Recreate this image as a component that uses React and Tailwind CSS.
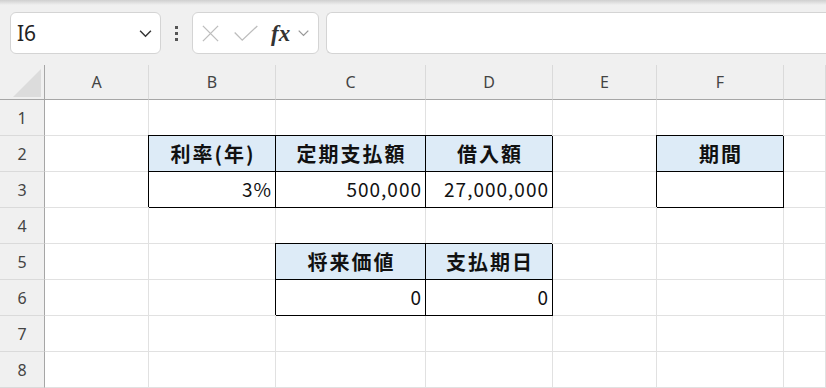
import React from "react";

const COLS = ["A", "B", "C", "D", "E", "F", ""];

// cells keyed by "row-col"
const CELLS = {
  "2-1": { text: "利率(年)", head: true },
  "2-2": { text: "定期支払額", head: true },
  "2-3": { text: "借入額", head: true },
  "2-5": { text: "期間", head: true },
  "3-1": { text: "3%", box: true },
  "3-2": { text: "500,000", box: true },
  "3-3": { text: "27,000,000", box: true },
  "3-5": { text: "", box: true },
  "5-2": { text: "将来価値", head: true },
  "5-3": { text: "支払期日", head: true },
  "6-2": { text: "0", box: true },
  "6-3": { text: "0", box: true },
};

function Chevron({ className }) {
  return (
    <svg viewBox="0 0 16 10" className={className} fill="none" stroke="currentColor" strokeWidth="1.6">
      <path d="M2 2 L8 8 L14 2" />
    </svg>
  );
}

function Toolbar() {
  return (
    <div className="relative h-[65px] bg-[#f0f0f0]">
      <div className="h-[5px] bg-gradient-to-b from-[#cfcfcf] to-[#f0f0f0]" />
      <div className="flex items-start pl-[10px] pt-[7px]">
        {/* name box */}
        <div className="flex h-[42px] w-[151px] items-center justify-between rounded-[6px] border border-[#d4d4d4] bg-white pl-[6px] pr-[7px]">
          <span className="font-['Noto_Sans',sans-serif] text-[21px] leading-none text-[#222]">I6</span>
          <Chevron className="h-[9px] w-[15px] text-[#333]" />
        </div>
        {/* dots */}
        <div className="flex h-[42px] w-[31px] flex-col items-center justify-center gap-[3px]">
          <span className="h-[3px] w-[3px] bg-[#555]" />
          <span className="h-[3px] w-[3px] bg-[#555]" />
          <span className="h-[3px] w-[3px] bg-[#555]" />
        </div>
        {/* fx box */}
        <div className="flex h-[42px] w-[127px] items-center rounded-[6px] border border-[#d4d4d4] bg-white pl-[8px]">
          <svg viewBox="0 0 20 20" className="h-[19px] w-[19px] text-[#bdbdbd]" fill="none" stroke="currentColor" strokeWidth="1.4">
            <path d="M2 2 L18 18 M18 2 L2 18" />
          </svg>
          <svg viewBox="0 0 26 18" className="ml-[13px] h-[17px] w-[26px] text-[#bdbdbd]" fill="none" stroke="currentColor" strokeWidth="1.4">
            <path d="M1 8 L9 16 L25 1" />
          </svg>
          <span className="ml-[12px] font-['Liberation_Serif',serif] text-[23px] font-bold italic leading-none text-[#333]">fx</span>
          <Chevron className="ml-[7px] h-[8px] w-[13px] text-[#999]" />
        </div>
        {/* formula box */}
        <div className="ml-[7px] h-[42px] flex-1 rounded-l-[6px] border border-r-0 border-[#d4d4d4] bg-white" />
      </div>
    </div>
  );
}

function Corner() {
  return (
    <div className="relative border-b border-r border-[#a6a6a6] bg-[#f0f0f0]">
      <svg viewBox="0 0 28 28" className="absolute bottom-[2px] right-[3px] h-[28px] w-[28px]">
        <path d="M28 0 L28 28 L0 28 Z" fill="#dcdcdc" />
      </svg>
    </div>
  );
}

export default function App() {
  const rows = [1, 2, 3, 4, 5, 6, 7, 8];
  return (
    <div className="h-[388px] w-[826px] overflow-hidden bg-white">
      <Toolbar />
      <div className="grid grid-cols-[45px_104px_127px_150px_127px_104px_127px_1fr] grid-rows-[35px_repeat(8,36px)]">
        <Corner />
        {COLS.map((c, i) => (
          <div
            key={"h" + i}
            className="flex items-center justify-center border-b border-r border-b-[#a6a6a6] border-r-[#dadada] bg-[#f0f0f0] font-['Noto_Sans',sans-serif] text-[16px] text-[#444]"
          >
            {c}
          </div>
        ))}
        {rows.map((r) => (
          <React.Fragment key={r}>
            <div className="flex items-center justify-center border-b border-r border-b-[#dadada] border-r-[#a6a6a6] bg-[#f0f0f0] font-['Noto_Sans',sans-serif] text-[16px] text-[#444]">
              {r}
            </div>
            {COLS.map((_, ci) => {
              const cell = CELLS[`${r}-${ci}`];
              if (!cell) {
                return <div key={ci} className="border-b border-r border-[#e1e1e1]" />;
              }
              if (cell.head) {
                return (
                  <div
                    key={ci}
                    className="flex items-center justify-center border-b border-r border-black bg-[#ddebf7] pl-[2px] font-['Noto_Sans_CJK_JP',sans-serif] text-[20px] font-bold tracking-[2px] text-[#111] shadow-[-1px_-1px_0_0_#000]"
                  >
                    {cell.text}
                  </div>
                );
              }
              return (
                <div
                  key={ci}
                  className="flex items-center justify-end border-b border-r border-black bg-white pr-[3px] font-['Noto_Sans_CJK_JP',sans-serif] text-[19px] tracking-[1px] text-[#111] shadow-[-1px_-1px_0_0_#000]"
                >
                  {cell.text}
                </div>
              );
            })}
          </React.Fragment>
        ))}
      </div>
    </div>
  );
}
